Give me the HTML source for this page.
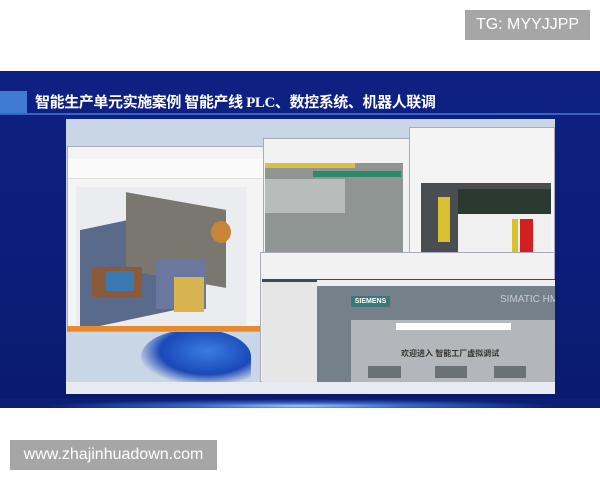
<!DOCTYPE html>
<html><head><meta charset="utf-8"><style>
*{margin:0;padding:0;box-sizing:border-box}
body{width:600px;height:480px;background:#fff;position:relative;overflow:hidden;font-family:"Liberation Sans","Noto Sans CJK SC",sans-serif}
.a{position:absolute;white-space:nowrap}
.badge{background:#a6a6a6;color:#fff;font-size:16px;display:flex;align-items:center;justify-content:center}
</style></head><body>
<div class="a badge" style="left:465px;top:10px;width:125px;height:30px">TG: MYYJJPP</div>
<div class="a badge" style="left:10px;top:440px;width:207px;height:30px">www.zhajinhuadown.com</div>

<div class="a" style="left:0;top:71px;width:600px;height:337px;background:linear-gradient(#0e2183,#0b1d78 60%,#0a1a6e)"></div>
<div class="a" style="left:0;top:398px;width:600px;height:10px;background:radial-gradient(ellipse at 50% 80%,#9fc8ff 0%,#3a66c8 25%,#0c1f74 60%)"></div>
<div class="a" style="left:0;top:91px;width:27px;height:22px;background:#3f7bd0"></div>
<div class="a" style="left:0;top:113px;width:600px;height:2px;background:#3566c0"></div>
<div class="a" style="left:35px;top:92px;color:#fff;font-weight:bold;font-size:15px;line-height:22px;font-family:'Liberation Serif','Noto Sans CJK SC',sans-serif;letter-spacing:-0.4px">智能生产单元实施案例 智能产线 PLC、数控系统、机器人联调</div>

<div class="a" style="left:66px;top:119px;width:489px;height:275px;background:#c9d6e6;overflow:hidden">
  <div class="a" style="left:75px;top:210px;width:110px;height:55px;border-radius:50% 50% 10% 50%;background:radial-gradient(ellipse at 60% 40%,#3a7de0,#1a48b8 50%,#c9d6e6 75%)"></div>
  <div class="a" style="left:1px;top:27px;width:197px;height:186px;background:#f4f4f4;border:1px solid #aab"></div>
  <div class="a" style="left:2px;top:40px;width:195px;height:20px;background:#fafafa;border-bottom:1px solid #ddd"></div>
  <div class="a" style="left:10px;top:68px;width:170px;height:140px;background:#ebecef"></div>
  <div class="a" style="left:14px;top:100px;width:105px;height:100px;background:#5a6a8a;transform:skewY(-12deg)"></div>
  <div class="a" style="left:60px;top:82px;width:100px;height:78px;background:#7a7670;transform:skewY(10deg)"></div>
  <div class="a" style="left:26px;top:148px;width:50px;height:30px;background:#8a5a3a"></div>
  <div class="a" style="left:90px;top:140px;width:50px;height:50px;background:#6a78a0"></div>
  <div class="a" style="left:145px;top:102px;width:20px;height:22px;border-radius:50%;background:#c8843a"></div>
  <div class="a" style="left:108px;top:158px;width:30px;height:35px;background:#d8b450"></div>
  <div class="a" style="left:40px;top:152px;width:28px;height:20px;background:#3a7ab0"></div>
  <div class="a" style="left:1px;top:207px;width:197px;height:5px;background:#e88a2a"></div>
  <div class="a" style="left:197px;top:19px;width:148px;height:116px;background:#f2f2f2;border:1px solid #aab"></div>
  <div class="a" style="left:199px;top:44px;width:138px;height:90px;background:#8f9592"></div>
  <div class="a" style="left:199px;top:44px;width:90px;height:5px;background:#d8c040"></div>
  <div class="a" style="left:247px;top:52px;width:88px;height:6px;background:#2a8a6a"></div>
  <div class="a" style="left:199px;top:60px;width:80px;height:34px;background:#b8bcba"></div>
  <div class="a" style="left:343px;top:8px;width:146px;height:127px;background:#f4f4f4;border:1px solid #aab"></div>
  <div class="a" style="left:355px;top:64px;width:130px;height:70px;background:#4a4e50"></div>
  <div class="a" style="left:372px;top:78px;width:12px;height:45px;background:#d8c030"></div>
  <div class="a" style="left:392px;top:70px;width:93px;height:25px;background:#2a3a30"></div>
  <div class="a" style="left:392px;top:95px;width:93px;height:39px;background:#f0f0f0"></div>
  <div class="a" style="left:446px;top:100px;width:6px;height:34px;background:#d8c030"></div>
  <div class="a" style="left:454px;top:100px;width:13px;height:34px;background:#d02020"></div>
  <div class="a" style="left:194px;top:133px;width:295px;height:130px;background:#f2f2f2;border:1px solid #aab"></div>
  <div class="a" style="left:196px;top:160px;width:56px;height:103px;background:#e6e6e6;border-right:1px solid #999"></div>
  <div class="a" style="left:196px;top:160px;width:293px;height:3px;background:#3a4a5a"></div>
  <div class="a" style="left:251px;top:161px;width:238px;height:102px;background:#74808a"></div>
  <div class="a" style="left:251px;top:161px;width:238px;height:6px;background:#eee"></div>
  <div class="a" style="left:285px;top:177px;width:39px;height:11px;background:#3c7878;color:#fff;font-size:7px;font-weight:bold;line-height:11px;text-align:center">SIEMENS</div>
  <div class="a" style="left:434px;top:175px;color:#c8ccd0;font-size:10px">SIMATIC HMI</div>
  <div class="a" style="left:285px;top:201px;width:204px;height:62px;background:#b3b7bb"></div>
  <div class="a" style="left:330px;top:204px;width:115px;height:7px;background:#fff"></div>
  <div class="a" style="left:335px;top:229px;color:#333;font-size:8px;font-weight:bold">欢迎进入 智能工厂虚拟调试</div>
  <div class="a" style="left:302px;top:247px;width:33px;height:12px;background:#6a7278"></div>
  <div class="a" style="left:369px;top:247px;width:32px;height:12px;background:#6a7278"></div>
  <div class="a" style="left:428px;top:247px;width:32px;height:12px;background:#6a7278"></div>
  <div class="a" style="left:0;top:263px;width:489px;height:12px;background:#e6ebf2"></div>
</div>
</body></html>
